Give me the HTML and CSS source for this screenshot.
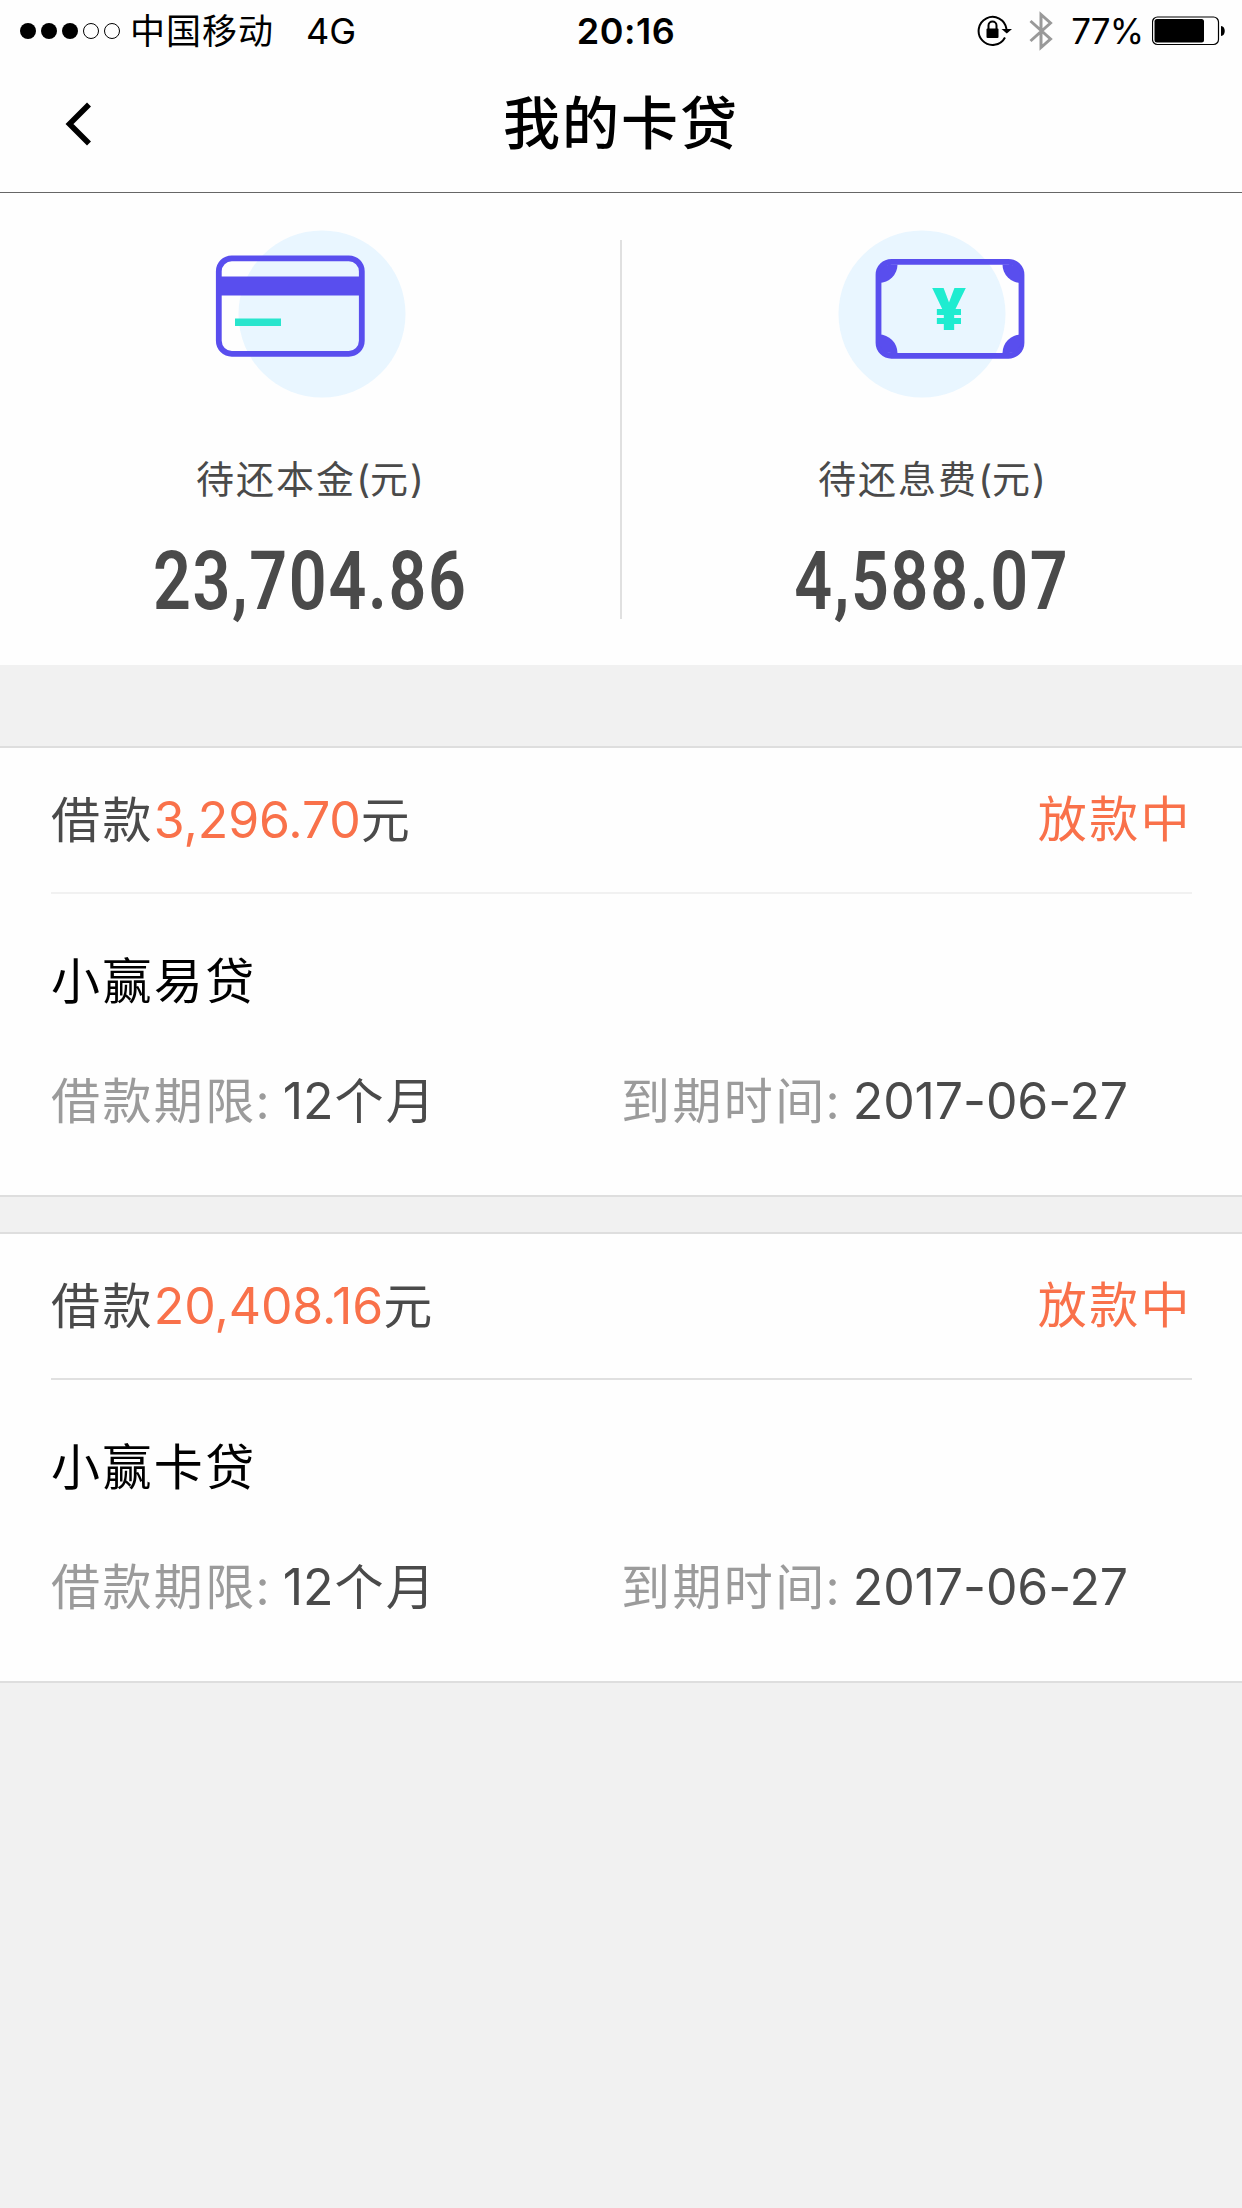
FILE: index.html
```html
<!DOCTYPE html>
<html lang="zh-CN">
<head>
  <meta charset="UTF-8" />
  <meta name="viewport" content="width=device-width, initial-scale=1.0"/>
  <title>我的卡贷</title>
  <link rel="stylesheet" href="styles.css">
</head>
<body>

  <div class="status-bar">
    <div class="status-left">
      <svg class="signal" width="102" height="18" viewBox="0 0 102 18">
        <circle cx="8" cy="9" r="8"/>
        <circle cx="29" cy="9" r="8"/>
        <circle cx="50" cy="9" r="8"/>
        <circle class="empty" cx="71" cy="9" r="7.5"/>
        <circle class="empty" cx="92" cy="9" r="7.5"/>
      </svg>
      <span class="carrier">中国移动</span>
      <span class="network">4G</span>
    </div>
    <div class="time">20:16</div>
    <div class="status-right">
      <svg width="36" height="32" viewBox="0 0 36 32">
        <path d="M28 22.500A14 14 0 1 1 29.500 14" fill="none" stroke="#000" stroke-width="2"/>
        <path d="M24.500 14h10.500l-5.200 4.500z"/>
        <rect x="9.500" y="13.500" width="12" height="9.500" rx="1"/>
        <path d="M11.500 14v-3.500a4 4 0 0 1 8 0V14" fill="none" stroke="#000" stroke-width="2"/>
      </svg>
      <svg class="bluetooth" width="24" height="40" viewBox="0 0 24 40">
        <path d="M1.500 10L21.500 28L12 36.500V3.500L21.500 12L1.500 30" fill="none" stroke="#999" stroke-width="3"/>
      </svg>
      <span class="percent">77%</span>
      <svg class="battery" width="74" height="30" viewBox="0 0 74 30">
        <rect x="0.500" y="1" width="66" height="27.500" rx="5" fill="none" stroke="#000" stroke-width="1.200"/>
        <rect x="2.500" y="3" width="49.500" height="23.500" rx="2.500"/>
        <path d="M69 10c5 0 5 10 0 10z"/>
      </svg>
    </div>
  </div>

  <div class="nav">
    <svg class="back" width="28" height="46" viewBox="0 0 28 46">
      <path d="M24 3.500L4.500 23L24 42.500" fill="none" stroke="#000" stroke-width="5.600"/>
    </svg>
    <h1>我的卡贷</h1>
  </div>

  <div class="summary">
    <div class="summary-item">
      <svg width="240" height="170" viewBox="0 0 240 170">
        <circle cx="132" cy="85" r="83.500" fill="#e9f6ff"/>
        <rect x="28.800" y="29.300" width="143" height="95.500" rx="13" fill="none" stroke="#594eee" stroke-width="5.800"/>
        <rect x="28" y="47.500" width="145" height="19" fill="#594eee"/>
        <rect x="45" y="89.500" width="46" height="7.500" fill="#29e5cd"/>
      </svg>
      <div class="label">待还本金<i>(</i>元<i>)</i></div>
      <div class="amount">23,704.86</div>
    </div>
    <div class="divider"></div>
    <div class="summary-item">
      <svg width="240" height="170" viewBox="1 0 240 170">
        <circle cx="111" cy="85" r="83.500" fill="#e9f6ff"/>
        <rect x="67.500" y="32.800" width="143" height="94" rx="13" fill="none" stroke="#594eee" stroke-width="5.800"/>
        <g fill="#594eee">
          <path d="M68 54a18.500 18.500 0 0 0 18.500-18.500H80a12 12 0 0 0-12 12z"/>
          <path d="M210 54a18.500 18.500 0 0 1-18.500-18.500H198a12 12 0 0 1 12 12z"/>
          <path d="M68 105.500a18.500 18.500 0 0 1 18.500 18.500H80a12 12 0 0 1-12-12z"/>
          <path d="M210 105.500a18.500 18.500 0 0 0-18.500 18.500H198a12 12 0 0 0 12-12z"/>
        </g>
        <text class="yen" x="138" y="101" text-anchor="middle">¥</text>
      </svg>
      <div class="label">待还息费<i>(</i>元<i>)</i></div>
      <div class="amount">4,588.07</div>
    </div>
  </div>

  <div class="loan">
    <div class="loan-head">
      <div>借款<span class="money">3,296.70</span>元</div>
      <div class="state">放款中</div>
    </div>
    <div class="loan-name">小赢易贷</div>
    <div class="loan-info">
      <div><span class="key">借款期限<i>:</i></span><b>12</b>个月</div>
      <div><span class="key">到期时间<i>:</i></span><b>2017-06-27</b></div>
    </div>
  </div>

  <div class="loan">
    <div class="loan-head dark">
      <div>借款<span class="money">20,408.16</span>元</div>
      <div class="state">放款中</div>
    </div>
    <div class="loan-name">小赢卡贷</div>
    <div class="loan-info">
      <div><span class="key">借款期限<i>:</i></span><b>12</b>个月</div>
      <div><span class="key">到期时间<i>:</i></span><b>2017-06-27</b></div>
    </div>
  </div>

</body>
</html>
```
FILE: styles.css
```css
* {
  box-sizing: border-box;
}
body {
  font-family: Inter, "Noto Sans CJK SC", sans-serif;
  background-color: #f1f1f1;
  margin: 0;
  color: #4a4a4a;
}
svg {
  display: block;
  flex: none;
}
i, b {
  font-style: normal;
  font-weight: 400;
}

/* status bar */
.status-bar {
  display: grid;
  grid-template-columns: 1fr auto 1fr;
  align-items: center;
  height: 62px;
  padding: 0 16px 0 20px;
  background-color: #fefefe;
  color: #000;
  font-size: 36px;
  line-height: 62px;
}
.status-left, .status-right {
  display: flex;
  align-items: center;
}
.status-right {
  justify-content: flex-end;
}
.signal .empty {
  fill: none;
  stroke: #000;
  stroke-width: 1;
}
.carrier {
  margin-left: 8px;
  font-size: 35px;
  letter-spacing: 1px;
}
.network {
  margin-left: 32px;
}
.time {
  padding-left: 6px;
  font-weight: 600;
  letter-spacing: 0.5px;
}
.bluetooth {
  margin: 0 18px 0 16px;
}
.percent {
  font-size: 35px;
  letter-spacing: -1px;
}
.battery {
  margin-left: 9px;
}

/* title bar */
.nav {
  display: grid;
  grid-template-columns: 60px 1fr 60px;
  align-items: center;
  height: 131px;
  padding: 0 62px 6px;
  background-color: #fefefe;
  border-bottom: 1px solid #666;
}
.back {
  margin-left: 3px;
}
.nav h1 {
  margin: 0;
  color: #000;
  font-size: 57px;
  font-weight: 500;
  line-height: 80px;
  letter-spacing: 2px;
  text-align: center;
}

/* totals */
.summary {
  display: flex;
  height: 472px;
  padding: 36px 0 46px;
  margin-bottom: 81px;
  background-color: #fefefe;
}
.summary-item {
  flex: 1;
  display: flex;
  flex-direction: column;
  align-items: center;
}
.divider {
  width: 2px;
  margin-top: 11px;
  background-color: #e0e0e0;
}
.label {
  margin-top: 53px;
  font-size: 38px;
  line-height: 54px;
  letter-spacing: 2px;
}
.label i {
  letter-spacing: 0;
}
.amount {
  margin-top: 27px;
  font-family: Roboto, sans-serif;
  font-size: 82px;
  font-weight: 600;
  line-height: 96px;
  letter-spacing: 2px;
  transform: scaleX(0.81);
}
.yen {
  font-family: "Open Sans", sans-serif;
  font-size: 58px;
  font-weight: 800;
  fill: #1fecd0;
}

/* loan cards */
.loan {
  height: 451px;
  padding: 0 50px 0 51px;
  margin-bottom: 35px;
  background-color: #fefefe;
  border-top: 2px solid #dedede;
  border-bottom: 2px solid #dedede;
  font-size: 49px;
  letter-spacing: 2.400px;
}
.loan-head {
  display: flex;
  justify-content: space-between;
  height: 146px;
  line-height: 144px;
  border-bottom: 2px solid #f1f1f1;
}
.loan-head.dark {
  border-bottom-color: #e0e0e0;
}
.money {
  color: #f9714a;
  font-size: 50px;
  letter-spacing: -0.100px;
}
.state {
  color: #f9714a;
}
.loan-name {
  margin-top: 52px;
  color: #000;
  line-height: 72px;
}
.loan-info {
  display: grid;
  grid-template-columns: 570px 1fr;
  margin-top: 47px;
  line-height: 72px;
}
.loan-info b {
  margin-right: 1px;
  font-size: 50px;
  letter-spacing: -0.100px;
}
.key {
  margin-right: 13px;
  color: #9b9b9b;
}
.key i {
  letter-spacing: 0;
  margin-left: -1px;
}
```
